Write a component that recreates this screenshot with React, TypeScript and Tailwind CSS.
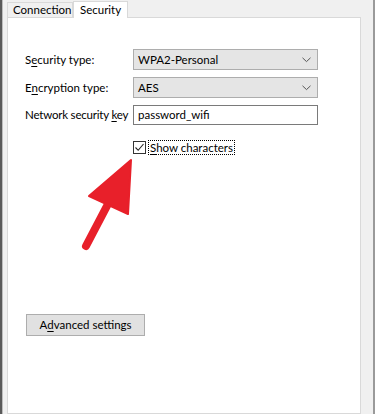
import React from "react";

const U = ({ children }: { children: React.ReactNode }) => (
  <span className="underline underline-offset-[2px] decoration-[1px]">{children}</span>
);

const Chevron = () => (
  <svg width="9" height="6" viewBox="0 0 9 6" className="mr-[6px]">
    <path d="M0.5 0.8 L4.5 4.6 L8.5 0.8" fill="none" stroke="#555" strokeWidth="1" />
  </svg>
);

export default function App() {
  return (
    <div
      className="relative w-[375px] h-[414px] overflow-hidden bg-[#f0f0f0] flex text-[11.5px] text-[#000]"
      style={{ fontFamily: 'Lato, "Noto Sans", sans-serif' }}
    >
      <div className="w-[2px] bg-[#5a5a5a]" />
      <div className="w-[1px] bg-[#bdbdbd]" />
      <div className="flex-1 flex flex-col pl-[4px] pr-[8px]">
        <div className="flex items-end h-[17px]">
          <div className="h-[15px] w-[66px] border border-b-0 border-[#d9d9d9] bg-[#f0f0f0] flex items-center pl-[5px] leading-none whitespace-nowrap">
            Connection
          </div>
          <div className="h-[17px] w-[55px] border border-b-0 border-[#d9d9d9] bg-white flex items-center pl-[6px] leading-none mb-[-1px] relative z-10">
            Security
          </div>
        </div>
        <div className="flex-1 border border-[#d9d9d9] bg-white pl-[17px] pt-[31px]">
          <div className="flex flex-col gap-[7px]">
            <div className="flex items-center h-[21px]">
              <div className="w-[108px]">
                S<U>e</U>curity type:
              </div>
              <div className="w-[185px] h-[21px] bg-[#e5e5e5] border border-[#adadad] flex items-center justify-between pl-[4px]">
                <span>WPA2-Personal</span>
                <Chevron />
              </div>
            </div>
            <div className="flex items-center h-[21px]">
              <div className="w-[108px]">
                E<U>n</U>cryption type:
              </div>
              <div className="w-[185px] h-[21px] bg-[#e5e5e5] border border-[#adadad] flex items-center justify-between pl-[4px]">
                <span>AES</span>
                <Chevron />
              </div>
            </div>
            <div className="flex items-center h-[20px]">
              <div className="w-[108px] whitespace-nowrap tracking-[-0.2px]">
                Network security <U>k</U>ey
              </div>
              <div className="w-[185px] h-[20px] bg-white border border-[#7a7a7a] flex items-center pl-[4px]">
                password_wifi
              </div>
            </div>
          </div>
          <div className="flex items-center ml-[108px] mt-[14px] h-[16px]">
            <div className="w-[13px] h-[13px] border border-[#333] bg-white flex items-center justify-center">
              <svg width="11" height="11" viewBox="0 0 11 11">
                <path d="M1.5 5.5 L4.2 8.3 L9.5 2" fill="none" stroke="#222" strokeWidth="1.1" />
              </svg>
            </div>
            <div className="ml-[2px] border border-dotted border-[#000] px-[1px] leading-[13px]">
              <U>S</U>how characters
            </div>
          </div>
          <div className="mt-[159px] ml-[1px] w-[119px] h-[22px] bg-[#e1e1e1] border border-[#adadad] flex items-center justify-center">
            A<U>d</U>vanced settings
          </div>
        </div>
      </div>
      <div className="w-[6px] bg-[#f0f0f0]" />
      <div className="absolute right-0 top-0 w-[2px] h-full bg-[#9a9a9a]" />
      <svg className="absolute left-0 top-0" width="375" height="414" viewBox="0 0 375 414">
        <line x1="86" y1="246" x2="108" y2="204" stroke="#e8202a" strokeWidth="8" strokeLinecap="round" />
        <path d="M131 160 L89 196 L128 214 Z" fill="#e8202a" stroke="#e8202a" strokeWidth="2" strokeLinejoin="round" />
      </svg>
    </div>
  );
}
